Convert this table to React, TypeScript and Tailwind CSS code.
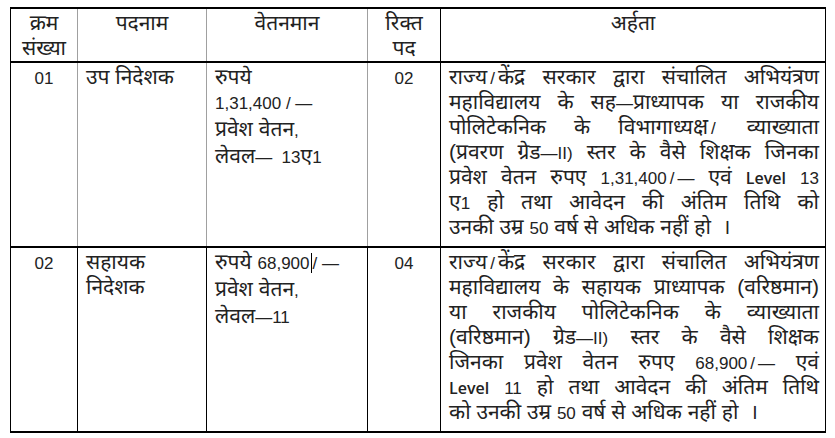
import React from "react";

const font = { fontFamily: '"Liberation Sans", "Noto Sans", "Noto Sans Devanagari", Arial, sans-serif' };

function Slash() {
  return <span className="inline-block mx-[3px] text-[17px]">/</span>;
}

function N({ children }: { children: React.ReactNode }) {
  return <span className="text-[17px]">{children}</span>;
}

function JLine({ children, last = false }: { children: React.ReactNode; last?: boolean }) {
  return (
    <div className={last ? "text-left h-[25px]" : "text-justify [text-align-last:justify] h-[25px]"}>{children}</div>
  );
}

function Lvl({ children }: { children: React.ReactNode }) {
  return <span className="font-semibold text-[16px]" style={{ fontFamily: '"Open Sans", sans-serif' }}>{children}</span>;
}

export default function App() {
  return (
    <div className="bg-white w-[835px] h-[438px] pt-[7px] pl-[10px] text-[21px] leading-[25px] text-[#222]" style={font}>
      <div className="w-[816px] border-l border-r border-black border-t-2 border-b-2">
        {/* header */}
        <div className="grid grid-cols-[67px_129px_161px_73px_384px] h-[54px] border-b-2 border-black">
          <div className="border-r border-[#a0a0a0] text-center pt-px">
            <div>क्रम</div>
            <div>संख्या</div>
          </div>
          <div className="border-r border-[#a0a0a0] text-center pt-px">पदनाम</div>
          <div className="border-r border-[#a0a0a0] text-center pt-px">वेतनमान</div>
          <div className="border-r border-black text-center pt-px">
            <div>रिक्त</div>
            <div>पद</div>
          </div>
          <div className="text-center pt-px">अर्हता</div>
        </div>
        {/* row 1 */}
        <div className="grid grid-cols-[67px_129px_161px_73px_384px] h-[185px] border-b-2 border-black">
          <div className="border-r border-[#a0a0a0] text-center pt-px"><N>01</N></div>
          <div className="border-r border-[#a0a0a0] pl-[8px] pt-px">उप निदेशक</div>
          <div className="border-r border-[#a0a0a0] pl-[8px] pt-px">
            <div>रुपये</div>
            <div><N>1,31,400 / —</N></div>
            <div>प्रवेश वेतन<N>,</N></div>
            <div>लेवल<N>—&nbsp; 13</N>ए<N>1</N></div>
          </div>
          <div className="border-r border-black text-center pt-px"><N>02</N></div>
          <div className="pl-[8px] pr-[6px] pt-px">
            <JLine>राज्य<Slash />केंद्र सरकार द्वारा संचालित अभियंत्रण</JLine>
            <JLine>महाविद्यालय के सह<N>—</N>प्राध्यापक या राजकीय</JLine>
            <JLine>पोलिटेकनिक के विभागाध्यक्ष<Slash /> व्याख्याता</JLine>
            <JLine>(प्रवरण ग्रेड<N>—II)</N> स्तर के वैसे शिक्षक जिनका</JLine>
            <JLine>प्रवेश वेतन रुपए <N>1,31,400</N><Slash /><N>—</N> एवं <Lvl>Level</Lvl> <N>13</N></JLine>
            <JLine>ए<N>1</N> हो तथा आवेदन की अंतिम तिथि को</JLine>
            <JLine last>उनकी उम्र <N>50</N> वर्ष से अधिक नहीं हो &nbsp;।</JLine>
          </div>
        </div>
        {/* row 2 */}
        <div className="grid grid-cols-[67px_129px_161px_73px_384px] h-[183px]">
          <div className="border-r border-black text-center pt-px"><N>02</N></div>
          <div className="border-r border-black pl-[8px] pt-px">
            <div>सहायक</div>
            <div>निदेशक</div>
          </div>
          <div className="border-r border-black pl-[8px] pt-px">
            <div>
              रुपये <N>68,900</N><span className="inline-block w-px h-[20px] bg-black align-middle mx-px" /><N>/ —</N>
            </div>
            <div>प्रवेश वेतन<N>,</N></div>
            <div>लेवल<N>—11</N></div>
          </div>
          <div className="border-r border-black text-center pt-px"><N>04</N></div>
          <div className="pl-[8px] pr-[6px] pt-px">
            <JLine>राज्य<Slash />केंद्र सरकार द्वारा संचालित अभियंत्रण</JLine>
            <JLine>महाविद्यालय के सहायक प्राध्यापक (वरिष्ठमान)</JLine>
            <JLine>या राजकीय पोलिटेकनिक के व्याख्याता</JLine>
            <JLine>(वरिष्ठमान) ग्रेड<N>—II)</N> स्तर के वैसे शिक्षक</JLine>
            <JLine>जिनका प्रवेश वेतन रुपए <N>68,900</N><Slash /><N>—</N> एवं</JLine>
            <JLine><Lvl>Level</Lvl> <N>11</N> हो तथा आवेदन की अंतिम तिथि</JLine>
            <JLine last>को उनकी उम्र <N>50</N> वर्ष से अधिक नहीं हो &nbsp;।</JLine>
          </div>
        </div>
      </div>
    </div>
  );
}
